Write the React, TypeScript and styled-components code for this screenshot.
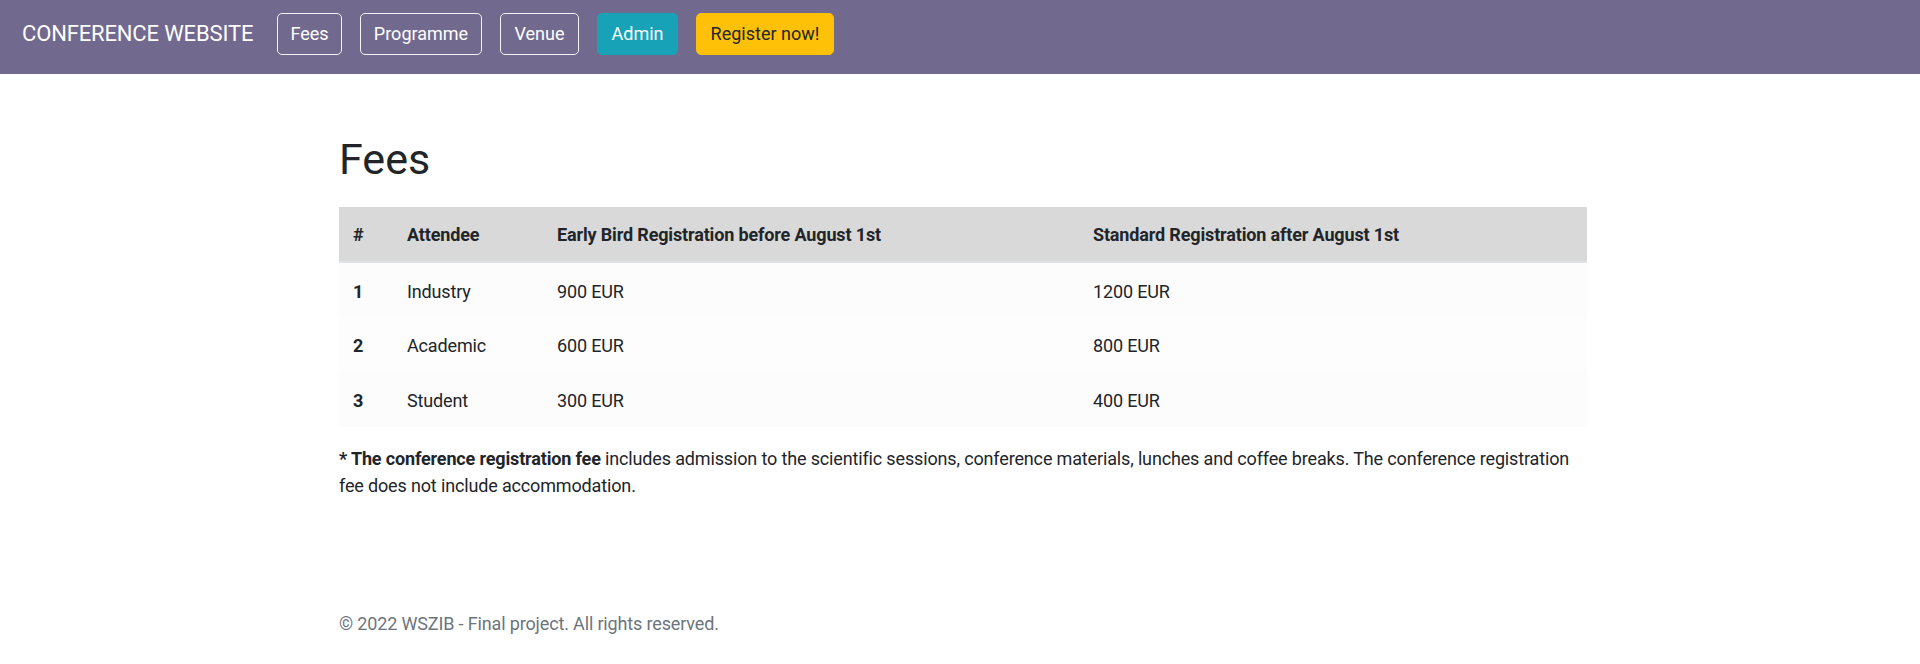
import React from "react";
import styled, { createGlobalStyle, css } from "styled-components";

const GlobalStyle = createGlobalStyle`
  html, body { margin: 0; padding: 0; background: #ffffff; }
  body {
    font-family: Roboto, "Liberation Sans", Arial, sans-serif;
    font-size: 18px;
    line-height: 1.5;
    letter-spacing: -0.15px;
    color: #212529;
  }
  * { box-sizing: border-box; }
`;

const Navbar = styled.nav`
  height: 74px;
  background: #72698e;
  display: flex;
  align-items: flex-start;
  padding: 13px 0 0 22px;
`;

const Brand = styled.a`
  width: 255px;
  font-size: 22px;
  line-height: 42px;
  letter-spacing: -0.15px;
  color: #ffffff;
  text-decoration: none;
  white-space: nowrap;
`;

type Variant = "outline" | "info" | "warning";

const NavButton = styled.button<{ $variant: Variant; $w: number }>`
  width: ${(p) => p.$w}px;
  height: 42px;
  margin-right: 18px;
  padding: 0;
  border-radius: 5px;
  font-family: inherit;
  font-size: 18px;
  letter-spacing: 0;
  line-height: 1;
  display: flex;
  align-items: center;
  justify-content: center;
  cursor: pointer;
  ${(p) =>
    p.$variant === "outline" &&
    css`
      background: transparent;
      border: 1px solid #f4f3f7;
      color: #ffffff;
    `}
  ${(p) =>
    p.$variant === "info" &&
    css`
      background: #17a2b8;
      border: 1px solid #17a2b8;
      color: #ffffff;
    `}
  ${(p) =>
    p.$variant === "warning" &&
    css`
      background: #ffc107;
      border: 1px solid #ffc107;
      color: #212529;
    `}
`;

const Main = styled.main`
  padding-left: 6px;
`;

const Container = styled.div`
  width: 1248px;
  margin: 0 auto;
`;

const Title = styled.h1`
  font-size: 43px;
  font-weight: 400;
  line-height: 52px;
  letter-spacing: 0;
  margin: 59px 0 22px;
  color: #212529;
`;

const Table = styled.table`
  width: 100%;
  border-collapse: collapse;
  table-layout: fixed;
  margin: 0;
`;

const HeadRow = styled.tr`
  background: #d9d9d9;
  border-bottom: 2px solid #dee2e6;
`;

const BodyRow = styled.tr<{ $odd: boolean }>`
  background: ${(p) => (p.$odd ? "#fcfcfc" : "#fdfdfd")};
`;

const HeadCell = styled.th<{ $w: number }>`
  width: ${(p) => p.$w}px;
  height: 55px;
  padding: 0 14px;
  text-align: left;
  font-weight: 700;
  vertical-align: middle;
`;

const RowHead = styled.th`
  height: 55px;
  padding: 2px 14px 0;
  text-align: left;
  font-weight: 700;
  vertical-align: middle;
`;

const Cell = styled.td`
  height: 55px;
  padding: 2px 14px 0;
  vertical-align: middle;
`;

const Note = styled.p`
  margin: 18px 0 0;
`;

const Footer = styled.footer`
  margin-top: 111px;
  color: #6c757d;
`;

const columns = [
  { label: "#", w: 54 },
  { label: "Attendee", w: 150 },
  { label: "Early Bird Registration before August 1st", w: 536 },
  { label: "Standard Registration after August 1st", w: 508 },
];

const rows = [
  { n: 1, who: "Industry", early: "900 EUR", std: "1200 EUR" },
  { n: 2, who: "Academic", early: "600 EUR", std: "800 EUR" },
  { n: 3, who: "Student", early: "300 EUR", std: "400 EUR" },
];

export default function App() {
  return (
    <>
      <GlobalStyle />
      <Navbar>
        <Brand href="#">CONFERENCE WEBSITE</Brand>
        <NavButton $variant="outline" $w={65}>Fees</NavButton>
        <NavButton $variant="outline" $w={122}>Programme</NavButton>
        <NavButton $variant="outline" $w={79}>Venue</NavButton>
        <NavButton $variant="info" $w={81}>Admin</NavButton>
        <NavButton $variant="warning" $w={138}>Register now!</NavButton>
      </Navbar>
      <Main>
        <Container>
          <Title>Fees</Title>
          <Table>
            <thead>
              <HeadRow>
                {columns.map((c) => (
                  <HeadCell key={c.label} $w={c.w}>
                    {c.label}
                  </HeadCell>
                ))}
              </HeadRow>
            </thead>
            <tbody>
              {rows.map((r, i) => (
                <BodyRow key={r.n} $odd={i % 2 === 0}>
                  <RowHead>{r.n}</RowHead>
                  <Cell>{r.who}</Cell>
                  <Cell>{r.early}</Cell>
                  <Cell>{r.std}</Cell>
                </BodyRow>
              ))}
            </tbody>
          </Table>
          <Note>
            <b>* The conference registration fee</b> includes admission to the
            scientific sessions, conference materials, lunches and coffee breaks.
            The conference registration fee does not include accommodation.
          </Note>
          <Footer>© 2022 WSZIB - Final project. All rights reserved.</Footer>
        </Container>
      </Main>
    </>
  );
}
